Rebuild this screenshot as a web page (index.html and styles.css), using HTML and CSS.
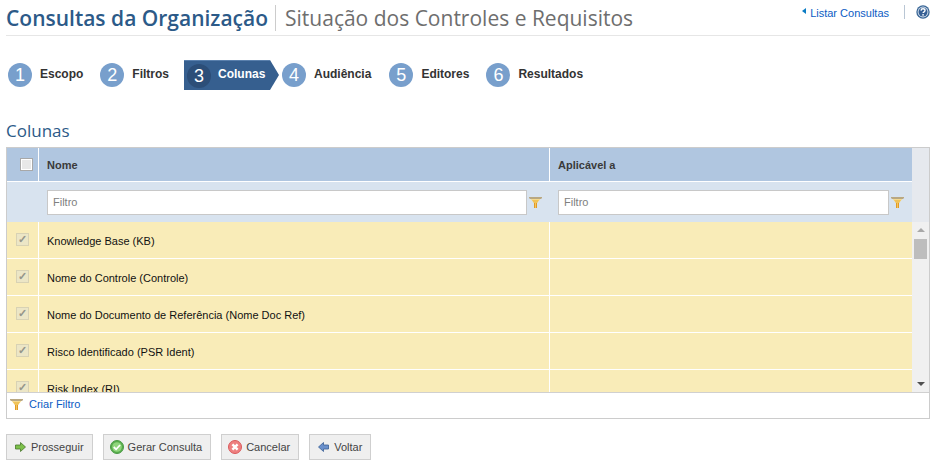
FILE: index.html
```html
<!DOCTYPE html>
<html lang="pt">
<head>
<meta charset="utf-8">
<title>Consultas da Organização</title>
<link rel="stylesheet" href="styles.css">
</head>
<body>
<svg class="defs" width="0" height="0" aria-hidden="true">
  <symbol id="funnel" viewBox="0 0 13 11">
    <path d="M0 0h13L8 6v5H5V6z" fill="#f6da8c"/>
    <path d="M3 3h7L8 6H5z" fill="#f0c258"/>
    <path d="M5 6h3v5H5z" fill="#e19a25"/>
    <path d="M6 6h1v5H6z" fill="#f4c560"/>
    <path d="M0 0h13v1l-1 1H1L0 1z" fill="#b9a882"/>
  </symbol>
</svg>
<header class="top">
  <div class="titles">
    <h1 class="title">Consultas da Organização</h1>
    <h2 class="subtitle">Situação dos Controles e Requisitos</h2>
  </div>
  <div class="top-links">
    <a class="list-link"><span class="tri"></span>Listar Consultas</a>
    <span class="top-sep"></span>
    <svg class="help" width="14" height="14" viewBox="0 0 14 14"><circle cx="7" cy="7" r="6.700" fill="#3a6797"/><circle cx="7" cy="7" r="5.400" fill="#dbe5f0"/><circle cx="7" cy="7" r="4.500" fill="#355f94"/><path d="M5 5.600c.1-1.200.9-1.800 2-1.800 1.200 0 2 .7 2 1.600 0 1.500-1.900 1.300-1.900 2.700" fill="none" stroke="#fff" stroke-width="1.400"/><rect x="6.300" y="9.100" width="1.500" height="1.500" fill="#fff"/></svg>
  </div>
</header>

<nav class="steps">
  <div class="step"><span class="num">1</span><span class="lbl">Escopo</span></div>
  <div class="step s2"><span class="num">2</span><span class="lbl">Filtros</span></div>
  <div class="step active"><span class="num">3</span><span class="lbl">Colunas</span></div>
  <div class="step s4"><span class="num">4</span><span class="lbl">Audiência</span></div>
  <div class="step"><span class="num">5</span><span class="lbl">Editores</span></div>
  <div class="step"><span class="num">6</span><span class="lbl">Resultados</span></div>
</nav>

<h3 class="section">Colunas</h3>

<section class="panel">
  <div class="row head">
    <div class="c0"><span class="cb"></span></div>
    <div class="c1">Nome</div>
    <div class="c2">Aplicável a</div>
    <div class="sb-blank"></div>
  </div>
  <div class="row filter">
    <div class="c0"></div>
    <div class="c1"><input class="finput" placeholder="Filtro"><svg class="funnel" width="13" height="11"><use href="#funnel"/></svg></div>
    <div class="c2"><input class="finput" placeholder="Filtro"><svg class="funnel" width="13" height="11"><use href="#funnel"/></svg></div>
    <div class="sb-blank"></div>
  </div>
  <div class="body">
    <div class="rows">
      <div class="row item"><div class="c0"><span class="cb on"></span></div><div class="c1">Knowledge Base (KB)</div><div class="c2"></div></div>
      <div class="row item"><div class="c0"><span class="cb on"></span></div><div class="c1">Nome do Controle (Controle)</div><div class="c2"></div></div>
      <div class="row item"><div class="c0"><span class="cb on"></span></div><div class="c1">Nome do Documento de Referência (Nome Doc Ref)</div><div class="c2"></div></div>
      <div class="row item"><div class="c0"><span class="cb on"></span></div><div class="c1">Risco Identificado (PSR Ident)</div><div class="c2"></div></div>
      <div class="row item"><div class="c0"><span class="cb on"></span></div><div class="c1">Risk Index (RI)</div><div class="c2"></div></div>
    </div>
    <div class="scroll">
      <span class="arrow up"></span>
      <span class="thumb"></span>
      <span class="arrow down"></span>
    </div>
  </div>
  <div class="foot">
    <svg class="funnel" width="13" height="11"><use href="#funnel"/></svg>
    <a class="link">Criar Filtro</a>
  </div>
</section>

<footer class="actions">
  <button class="btn"><svg width="11" height="10" viewBox="0 0 11 10"><path d="M.5 3h5V.5L10.500 5l-5 4.500V7h-5z" fill="#7cc04a" stroke="#47762b" stroke-width=".8"/></svg>Prosseguir</button>
  <button class="btn round"><svg width="14" height="14" viewBox="0 0 14 14"><circle cx="7" cy="7" r="6.500" fill="#57ad4c" stroke="#4b9a45"/><circle cx="7" cy="7" r="4.800" fill="#8fd57c"/><path d="M3.800 7l2.300 2.300 4-4.300" fill="none" stroke="#fff" stroke-width="1.800"/></svg>Gerar Consulta</button>
  <button class="btn round"><svg width="14" height="14" viewBox="0 0 14 14"><circle cx="7" cy="7" r="6.500" fill="#ee8080" stroke="#d95a5c"/><path d="M4.400 4.400l5.200 5.200M9.600 4.400l-5.200 5.200" stroke="#fff" stroke-width="2.400"/></svg>Cancelar</button>
  <button class="btn"><svg width="11" height="10" viewBox="0 0 11 10"><path d="M10.500 3h-5V.5L.5 5l5 4.500V7h5z" fill="#6a90cc" stroke="#3a5f96" stroke-width=".8"/></svg>Voltar</button>
</footer>
</body>
</html>
```

FILE: styles.css
```css
* { box-sizing: border-box; }
html, body { margin: 0; padding: 0; }
body { width: 940px; height: 464px; overflow: hidden; background: #fff; font-family: "Liberation Sans", Arial, sans-serif; font-size: 11px; color: #222; }
.defs { display: block; height: 0; }

.top { display: flex; justify-content: space-between; margin: 0 10px 0 6px; height: 36px; border-bottom: 1px solid #e6e6e6; }
.titles { display: flex; align-items: flex-start; padding-top: 5px; }
.title, .subtitle { margin: 0; font-family: "Open Sans", sans-serif; font-size: 21px; line-height: 26px; font-weight: 600; color: #2c5a88; }
.title { padding-right: 7px; border-right: 1px solid #ccc; }
.subtitle { font-weight: 400; color: #6e6e6e; margin-left: 9px; }
.top-links { display: flex; align-items: flex-start; padding-top: 5px; }
.list-link { display: flex; align-items: center; height: 15px; color: #0b5cc4; font-size: 11px; }
.tri { width: 0; height: 0; border: 3.500px solid transparent; border-left: 0; border-right: 4px solid #0a7cc4; margin-right: 4px; margin-top: -3px; }
.top-sep { width: 1px; height: 14px; background: #b9c6d4; margin: 0 11px 0 15px; }

.steps { display: flex; align-items: center; margin: 24px 0 0 8px; height: 30px; }
.step { display: flex; align-items: center; margin-right: 17px; height: 30px; }
.step.s2 { margin-right: 15px; }
.step.s4 { margin-right: 18px; }
.num { width: 24px; height: 24px; border-radius: 50%; background: #789fcc; color: #fff; font-size: 18px; line-height: 24px; text-align: center; margin-right: 8px; }
.lbl { font-size: 12px; font-weight: 700; color: #333; margin-top: -3px; }
.step.active { background: #365f8f; color: #fff; position: relative; padding-left: 3px; width: 86px; margin-right: 12px; border-top: 1px solid #5a80ad; }
.step.active::after { content: ""; position: absolute; left: 86px; top: -1px; border-style: solid; border-width: 15px 0 15px 9px; border-color: transparent transparent transparent #365f8f; }
.step.active .num { background: #2c4e78; margin-right: 7px; }
.step.active .lbl { color: #fff; }

.section { margin: 30px 0 0 6px; font-family: "Open Sans", sans-serif; font-size: 17px; line-height: 22px; font-weight: 400; color: #2c5a88; }

.panel { margin: 5px 10px 0 6px; border: 1px solid #ccc; width: 924px; }
.row { display: flex; }
.c0 { width: 32px; flex: none; border-right: 1px solid #fff; display: flex; align-items: center; justify-content: center; }
.c1 { width: 511px; flex: none; border-right: 1px solid #fff; padding-left: 8px; display: flex; align-items: center; }
.c2 { width: 362px; flex: none; padding-left: 8px; display: flex; align-items: center; }
.sb-blank { flex: 1; background: #e6e9ee; }

.head { height: 34px; font-weight: 700; color: #3a3a3a; }
.head .c0, .head .c1, .head .c2 { background: #b0c6e0; border-bottom: 1px solid #fff; }
.head .cb { margin-left: 7px; }
.filter { height: 40px; }
.filter .c0, .filter .c1, .filter .c2 { background: #d8e3ef; border-right: 0; }
.finput { width: 480px; height: 25px; border: 1px solid #c8c8c8; background: #fff; padding: 0 5px; font: 11px "Liberation Sans", Arial, sans-serif; color: #222; }
.finput::placeholder { color: #808080; opacity: 1; }
.filter .c2 .finput { width: 331px; }
.funnel { flex: none; }
.filter .funnel { margin-left: 2px; }

.cb { display: block; width: 13px; height: 13px; border: 1px solid #a8a8a8; background: #e8e8e8; box-shadow: inset 0 0 0 1px #fff; }
.cb.on { border-color: #d8d2b4; background: #ece6c6; box-shadow: none; position: relative; margin-top: -1px; }
.cb.on::after { content: "✓"; position: absolute; left: 1px; top: -1px; font-size: 11px; line-height: 13px; color: #96968a; font-weight: 700; }

.body { display: flex; height: 171px; overflow: hidden; border-bottom: 1px solid #d0d0d0; }
.rows { width: 905px; flex: none; }
.item { height: 37px; color: #111; border-bottom: 1px solid #fff; }
.item .c0, .item .c1, .item .c2 { background: #f9ecb8; }
.item .c1 { padding-top: 2px; }
.scroll { flex: 1; position: relative; background: #f0f0f0; }
.arrow { position: absolute; left: 5px; width: 0; height: 0; border-left: 4px solid transparent; border-right: 4px solid transparent; }
.arrow.up { top: 6px; border-bottom: 4px solid #a8a8a8; }
.arrow.down { bottom: 6px; border-top: 4px solid #505050; }
.thumb { position: absolute; left: 2px; top: 17px; width: 13px; height: 20px; background: #bdbdbd; }

.foot { height: 25px; display: flex; align-items: center; padding-left: 3px; padding-bottom: 3px; }
.link { color: #0b5cc4; margin-left: 6px; font-size: 11px; }

.actions { display: flex; gap: 10px; margin: 15px 0 0 6px; }
.btn { display: flex; align-items: center; gap: 5px; height: 26px; padding: 0 8px; border: 1px solid #cfcfcf; background: #efefef; color: #444; font: 11px "Liberation Sans", Arial, sans-serif; }
.btn.round svg { margin-left: -2px; margin-right: -1px; }
```
